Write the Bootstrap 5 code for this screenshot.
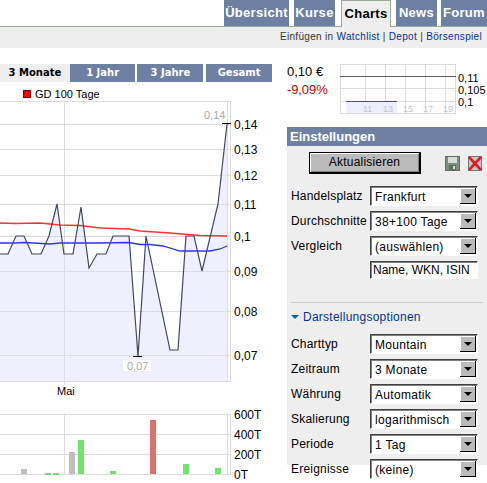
<!DOCTYPE html>
<html lang="de">
<head>
<meta charset="utf-8">
<title>Charts</title>
<link href="https://cdn.jsdelivr.net/npm/bootstrap@5.3.0/dist/css/bootstrap.min.css" rel="stylesheet">
<style>
html,body{margin:0;background:#fff;overflow:hidden}
body{width:487px;height:483px;font-family:"Liberation Sans",Arial,sans-serif;font-size:12px;color:#000;letter-spacing:.25px;line-height:14px}
a{color:#003399;text-decoration:none}
.top-tabs{height:27px;border-bottom:1px solid #9aaa96}
.top-tab{background:#6e80a2;color:#fff;font-weight:700;font-size:13px;height:26px;line-height:25px;text-align:center;letter-spacing:.3px}
.top-tab.on{background:#eee;color:#000;border:1px solid #9aaa96;border-bottom:0;line-height:25px;height:27px;position:relative}
.w1{width:65px;margin-right:5px}.w2{width:41px;margin-right:6px}.w3{width:50px;margin-right:5px}.w4{width:41px;margin-right:4px}.w5{width:46px}
.sub-bar{height:21px;background:#eee;font-size:10px;line-height:20px;padding-right:5px;color:#333;letter-spacing:.32px}
.main-left{width:287px;flex:none}
.main-right{width:200px;flex:none}
.period-tabs{margin-top:16px;height:18px;width:272px}
.period{background:#6e80a2;color:#fff;font:700 10px/18px "DejaVu Sans",sans-serif;text-align:center;letter-spacing:0;margin-left:2px;width:66px}
.period.on{background:#eee;color:#000;width:70px;margin-left:0}
.period.p2{width:66px;margin-left:0}
.period.p4{margin-left:3px}
.legend-row{height:19px;padding:4px 0 0 23px;line-height:14px;font-size:11px;letter-spacing:0}
.swatch{width:8px;height:8px;background:#f00;border:1px solid #800;display:inline-block;margin-right:4px}
.price-wrap{height:63px;margin-top:16px}
.price-col{width:53px}
.price-val{font-size:13px;line-height:18px;margin-top:-1px;letter-spacing:0}
.price-chg{color:#c00000;font-size:13px;line-height:18px;letter-spacing:-.1px}
.panel{background:#eee;height:338px;margin-top:0}
.panel-head{background:#6e80a2;color:#fff;font-weight:700;font-size:13px;line-height:19px;height:19px;padding-left:3px;letter-spacing:0}
.act-row{height:40px;padding:6px 0 0 22px}
.act-btn{width:112px;height:22px;padding:0;border:1px solid #000;border-right-width:2px;border-bottom-width:2px;border-radius:0;background:#bbb;box-shadow:inset 1px 1px 0 #fff,inset -1px -1px 0 #808080;font-size:12px;line-height:17px;color:#000;letter-spacing:.2px}
.act-btn:hover{background:#bbb;color:#000;border-color:#000}
.frm-row{height:25px;padding:0 9px 0 4px}
.frm-lbl{width:79px;flex:none;margin-top:3px;letter-spacing:.2px;white-space:nowrap}
.form-select.sel,.form-control.inp{width:108px;height:20px;min-height:0;padding:2px 17px 0 4px;border-radius:0;font-size:12px;line-height:14px;color:#000;letter-spacing:.3px;border-width:1px;border-style:solid;border-color:#404040 #fff #fff #404040;box-shadow:inset 1px 1px 0 #808080;background-color:#fff}
.form-select.sel{background-image:url("data:image/svg+xml,%3Csvg xmlns='http://www.w3.org/2000/svg' width='16' height='16'%3E%3Crect width='16' height='16' fill='%23000'/%3E%3Crect width='15' height='15' fill='%23fff'/%3E%3Crect x='1' y='1' width='14' height='14' fill='%23bbb'/%3E%3Cpath d='M4 6h8l-4 4z' fill='%23000'/%3E%3C/svg%3E");background-repeat:no-repeat;background-position:right 1px top 1px;background-size:16px 16px}
.form-control.inp{height:18px;padding:0 0 0 2px;font-size:12px;letter-spacing:0}
.rule{height:1px;background:#ccc;margin:0 4px;border:0;opacity:1}
.opt-head{color:#003399;height:31px;padding:7px 0 0 4px;letter-spacing:.25px}
.save-ic{margin-left:24px}
svg{display:block}
svg text{font-family:"Liberation Sans",Arial,sans-serif;letter-spacing:0}
</style>
</head>
<body>
<div class="top-tabs d-flex justify-content-end align-items-start">
  <div class="top-tab w1">Übersicht</div>
  <div class="top-tab w2">Kurse</div>
  <div class="top-tab on w3">Charts</div>
  <div class="top-tab w4">News</div>
  <div class="top-tab w5">Forum</div>
</div>
<div class="sub-bar text-end">Einfügen in <a href="#">Watchlist</a> | <a href="#">Depot</a> | <a href="#">Börsenspiel</a></div>
<div class="d-flex">
  <div class="main-left">
    <div class="period-tabs d-flex">
      <div class="period on">3 Monate</div>
      <div class="period p2">1 Jahr</div>
      <div class="period">3 Jahre</div>
      <div class="period p4">Gesamt</div>
    </div>
    <div class="legend-row d-flex align-items-center"><span class="swatch"></span>GD 100 Tage</div>
    <svg width="287" height="384" viewBox="0 100 287 384">
      <g stroke="#dcdcdc" stroke-width="1" fill="none" shape-rendering="crispEdges">
        <path d="M0 100.5H230.5V380.5H0"/>
        <path d="M0 123.5H230M0 148.5H230M0 174.5H230M0 203.5H230M0 235.5H230M0 270.5H230M0 310.5H230M0 354.5H230"/>
        <path d="M64.5 100V380M227.5 100V380"/>
        <path d="M0 413.5H230.5V473.5H0M0 433.5H230M0 453.5H230M64.5 413V473M227.5 413V473M230.5 413V473"/>
        <path d="M64.5 380V384"/>
      </g>
      <path d="M0 253H8L16 235H24L32 253H41L49 235L57 203L64 253H73L81 206L89 267L97 253H106L113 235H129L138 355L146 235L170 349H178L186 235H194L202 270L218 203L227 123V380H0Z" fill="#dcdcfa" fill-opacity=".45"/>
      <path d="M0 222L15 222.500L40 222L60 224L80 224.500L100 227L129 228L140 230L170 232L200 234.500L227 235" fill="none" stroke="#f33" stroke-width="1.300"/>
      <path d="M0 242L15 242L25 241.500L50 243L60 242L80 242L100 242L129 241.500L140 243.500L150 243.500L163 245L180 250L210 250L220 248L227 245" fill="none" stroke="#33f" stroke-width="1.300"/>
      <path d="M0 253H8L16 235H24L32 253H41L49 235L57 203L64 253H73L81 206L89 267L97 253H106L113 235H129L138 355L146 235L170 349H178L186 235H194L202 270L218 203L227 123" fill="none" stroke="#404860" stroke-width="1.200"/>
      <path d="M222 122.500H231M133 355.500H142" stroke="#000" shape-rendering="crispEdges"/>
      <text x="204" y="118" font-size="11" fill="#aaa">0,14</text>
      <rect x="123" y="359" width="28" height="11" fill="#fff"/>
      <text x="127" y="369" font-size="11" fill="#aaa">0,07</text>
      <g font-size="12" fill="#000">
        <text x="234" y="128">0,14</text><text x="234" y="153">0,13</text><text x="234" y="179">0,12</text><text x="234" y="208">0,11</text><text x="234" y="240">0,1</text><text x="234" y="275">0,09</text><text x="234" y="315">0,08</text><text x="234" y="359">0,07</text>
        <text x="57" y="394" font-size="11">Mai</text>
        <text x="234" y="418">600T</text><text x="234" y="438">400T</text><text x="234" y="458">200T</text><text x="234" y="478">0T</text>
      </g>
      <g fill="#bfbfbf"><rect x="21" y="468" width="6" height="5"/><rect x="69" y="451" width="6" height="22"/></g>
      <g fill="#74e070"><rect x="45" y="472" width="6" height="2"/><rect x="53" y="472" width="6" height="2"/><rect x="78" y="439" width="6" height="34"/><rect x="110" y="470" width="6" height="3"/><rect x="183" y="463" width="6" height="10"/><rect x="215" y="467" width="6" height="6"/></g>
      <rect x="150" y="419" width="6" height="54" fill="#e07070"/>
    </svg>
  </div>
  <div class="main-right">
    <div class="price-wrap d-flex">
      <div class="price-col">
        <div class="price-val">0,10 €</div>
        <div class="price-chg">-9,09%</div>
      </div>
      <svg width="147" height="50" viewBox="340 63 147 50">
        <g stroke="#dcdcdc" fill="none" shape-rendering="crispEdges">
          <path d="M340.500 63.500H455.500V112.500H340.500Z"/>
          <path d="M340 87.500H456M340 100.500H456M365.500 63V112M385.500 63V112M405.500 63V112M425.500 63V112M445.500 63V112"/>
        </g>
        <rect x="346" y="100" width="51" height="12" fill="#eeeefc"/>
        <path d="M340 75.500H456" stroke="#5a6070" shape-rendering="crispEdges"/>
        <path d="M346 100.500H397" stroke="#4a5080" shape-rendering="crispEdges"/>
        <g font-size="9" fill="#c4c4c4"><text x="363" y="111">11</text><text x="383" y="111">13</text><text x="403" y="111">15</text><text x="423" y="111">17</text><text x="443" y="111">19</text></g>
        <g font-size="11" fill="#000"><text x="458" y="81">0,11</text><text x="458" y="93">0,105</text><text x="458" y="105">0,1</text></g>
      </svg>
    </div>
    <div class="panel">
      <div class="panel-head">Einstellungen</div>
      <div class="act-row d-flex align-items-start">
        <button type="button" class="btn act-btn">Aktualisieren</button>
        <svg class="save-ic mt-1" width="15" height="15" viewBox="0 0 15 15"><rect x=".5" y=".5" width="14" height="14" fill="#7f8f7f" stroke="#5f6f5f"/><rect x="3" y="1" width="9" height="6" fill="#d8dcd8"/><rect x="4" y="9" width="7" height="5" fill="#5f6f5f"/><rect x="8" y="10" width="2" height="3" fill="#d8dcd8"/></svg>
        <svg class="ms-2 mt-1" width="14" height="15" viewBox="0 0 14 15"><rect x=".5" y=".5" width="13" height="14" fill="#c8c8c8" stroke="#777"/><path d="M1 1L13 14M13 1L1 14" stroke="#e02020" stroke-width="2.600"/></svg>
      </div>
      <div class="frm-row d-flex"><span class="frm-lbl">Handelsplatz</span><select class="form-select sel"><option>Frankfurt</option></select></div>
      <div class="frm-row d-flex"><span class="frm-lbl">Durchschnitte</span><select class="form-select sel"><option>38+100 Tage</option></select></div>
      <div class="frm-row d-flex"><span class="frm-lbl">Vergleich</span><select class="form-select sel"><option>(auswählen)</option></select></div>
      <div class="frm-row d-flex justify-content-end"><input class="form-control inp" type="text" value="Name, WKN, ISIN"></div>
      <hr class="rule mt-3 mb-0">
      <div class="opt-head d-flex align-items-start"><svg class="me-1 mt-1" width="8" height="6" viewBox="0 0 8 6"><path d="M0 1h8L4 5z" fill="#0066aa"/></svg><a href="#">Darstellungsoptionen</a></div>
      <div class="frm-row d-flex"><span class="frm-lbl">Charttyp</span><select class="form-select sel"><option>Mountain</option></select></div>
      <div class="frm-row d-flex"><span class="frm-lbl">Zeitraum</span><select class="form-select sel"><option>3 Monate</option></select></div>
      <div class="frm-row d-flex"><span class="frm-lbl">Währung</span><select class="form-select sel"><option>Automatik</option></select></div>
      <div class="frm-row d-flex"><span class="frm-lbl">Skalierung</span><select class="form-select sel"><option>logarithmisch</option></select></div>
      <div class="frm-row d-flex"><span class="frm-lbl">Periode</span><select class="form-select sel"><option>1 Tag</option></select></div>
      <div class="frm-row d-flex"><span class="frm-lbl">Ereignisse</span><select class="form-select sel"><option>(keine)</option></select></div>
    </div>
  </div>
</div>
<script src="https://cdn.jsdelivr.net/npm/bootstrap@5.3.0/dist/js/bootstrap.bundle.min.js"></script>
</body>
</html>
